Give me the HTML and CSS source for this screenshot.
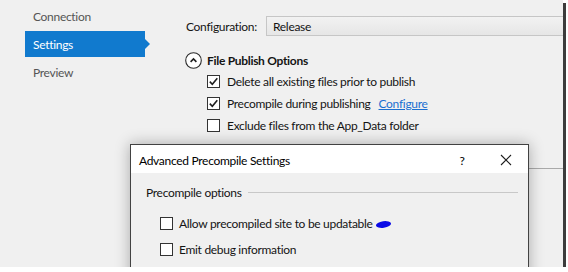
FILE: index.html
```html
<!DOCTYPE html>
<html lang="en">
  <head>
    <meta charset="UTF-8" />
    <title>Publish Settings</title>
    <link rel="stylesheet" href="styles.css">
  </head>
  <body>
    <div class="frame">
      <div class="nav">
        <div class="nav-item">Connection</div>
        <div class="nav-item active">Settings</div>
        <div class="nav-item">Preview</div>
      </div>

      <div class="main">
        <div class="config-row">
          <span class="config-label">Configuration:</span>
          <div class="combo">Release</div>
        </div>

        <div class="section-head">
          <svg class="collapse" width="17" height="17" viewBox="0 0 17 17">
            <circle cx="8.5" cy="8.5" r="7.8" fill="#fff" stroke="#2b2b2b" stroke-width="1.1" />
            <path d="M5.6 9.9 L8.5 7 L11.4 9.9" fill="none" stroke="#1e1e1e" stroke-width="1.6" />
          </svg>
          <span>File Publish Options</span>
        </div>

        <div class="check-row">
          <span class="box checked"><svg width="11" height="11" viewBox="0 0 11 11"><path d="M1.8 5.6 L4.3 8.2 L9.3 2.2" fill="none" stroke="#1e1e1e" stroke-width="1.6" /></svg></span>
          <span>Delete all existing files prior to publish</span>
        </div>
        <div class="check-row">
          <span class="box checked"><svg width="11" height="11" viewBox="0 0 11 11"><path d="M1.8 5.6 L4.3 8.2 L9.3 2.2" fill="none" stroke="#1e1e1e" stroke-width="1.6" /></svg></span>
          <span>Precompile during publishing</span>
          <a class="link" href="#">Configure</a>
        </div>
        <div class="check-row">
          <span class="box"></span>
          <span>Exclude files from the App_Data folder</span>
        </div>

        <div class="bottom-line"></div>
      </div>

      <div class="dialog">
        <div class="dialog-title">
          <span class="dialog-caption">Advanced Precompile Settings</span>
          <span class="title-btn help">?</span>
          <span class="title-btn">
            <svg width="12" height="12" viewBox="0 0 12 12"><path d="M1 1 L11 11 M11 1 L1 11" stroke="#1e1e1e" stroke-width="1.1" /></svg>
          </span>
        </div>
        <div class="dialog-body">
          <div class="group-head">
            <span>Precompile options</span>
            <span class="group-line"></span>
          </div>
          <div class="check-row dlg">
            <span class="box"></span>
            <span>Allow precompiled site to be updatable</span>
            <svg class="blob" width="17" height="9" viewBox="0 0 17 9">
              <ellipse cx="8.5" cy="4.5" rx="7.6" ry="3.3" fill="#0a0ae6" transform="rotate(-8 8.5 4.5)" />
            </svg>
          </div>
          <div class="check-row dlg">
            <span class="box"></span>
            <span>Emit debug information</span>
          </div>
        </div>
      </div>
    </div>
  </body>
</html>
```

FILE: styles.css
```css
* {
  margin: 0;
  padding: 0;
  box-sizing: border-box;
}

body {
  font-family: Lato, "Noto Sans", sans-serif;
  font-size: 12px;
  letter-spacing: -0.3px;
  color: #141414;
  background: #fff;
}

.frame {
  position: relative;
  width: 563px;
  height: 267px;
  background: #f0f0f0;
  box-shadow: 3px 3px 0 #3c3c3c;
  display: flex;
  overflow: hidden;
}

/* Left navigation */
.nav {
  width: 150px;
  padding-top: 3px;
  display: flex;
  flex-direction: column;
  gap: 2px;
}

.nav-item {
  position: relative;
  width: 120px;
  height: 26px;
  margin-left: 25px;
  padding-left: 8px;
  display: flex;
  align-items: center;
  color: #555;
}

.nav-item.active {
  background: #117ace;
  color: #fff;
}

.nav-item.active::after {
  content: "";
  position: absolute;
  right: -5px;
  top: 8px;
  border-left: 5px solid #117ace;
  border-top: 5px solid transparent;
  border-bottom: 5px solid transparent;
}

/* Main settings area */
.main {
  flex: 1;
  padding-left: 36px;
  padding-top: 16px;
  display: flex;
  flex-direction: column;
}

.config-row {
  display: flex;
  align-items: center;
  height: 20px;
}

.config-label {
  width: 80px;
}

.combo {
  flex: 1;
  height: 20px;
  padding-left: 6px;
  display: flex;
  align-items: center;
  border: 1px solid #c6c6c6;
  border-right: none;
  background: linear-gradient(#f2f2f2, #e6e6e6);
}

.section-head {
  margin-top: 16px;
  height: 16px;
  display: flex;
  align-items: center;
  gap: 5px;
  font-weight: bold;
}

.collapse {
  margin-left: -1px;
}

.check-row {
  height: 22px;
  display: flex;
  align-items: center;
  padding-left: 21px;
}

.section-head + .check-row {
  margin-top: 2px;
}

.box {
  width: 13px;
  height: 13px;
  border: 1px solid #333;
  background: #fff;
  margin-right: 7px;
  display: flex;
  align-items: center;
  justify-content: center;
}

.link {
  margin-left: 8px;
  color: #1a6fd0;
  text-decoration: underline;
}

.bottom-line {
  margin-top: 32px;
  margin-left: -36px;
  border-top: 1px solid #a9a9a9;
}

/* Overlapping dialog */
.dialog {
  position: absolute;
  left: 130px;
  top: 144px;
  width: 399px;
  height: 140px;
  border: 1px solid #424242;
  background: #f0f0f0;
  box-shadow: 0 0 14px rgba(0, 0, 0, 0.3);
}

.dialog-title {
  height: 28px;
  background: #fff;
  display: flex;
  align-items: center;
  padding-left: 8px;
  padding-top: 2px;
  color: #000;
}

.dialog-caption {
  flex: 1;
}

.title-btn {
  width: 44px;
  display: flex;
  justify-content: center;
}

.title-btn.help {
  width: 20px;
  margin-right: 12px;
}

.dialog-body {
  padding: 10px 10px 0 15px;
}

.group-head {
  height: 18px;
  display: flex;
  align-items: center;
  gap: 6px;
}

.group-line {
  flex: 1;
  border-top: 1px solid #c8c8c8;
}

.check-row.dlg {
  padding-left: 14px;
  height: 26px;
}

.group-head + .check-row {
  margin-top: 9px;
}

.check-row.dlg .box {
  margin-right: 6px;
}

.blob {
  margin-left: 2px;
  margin-top: 2px;
}
```
